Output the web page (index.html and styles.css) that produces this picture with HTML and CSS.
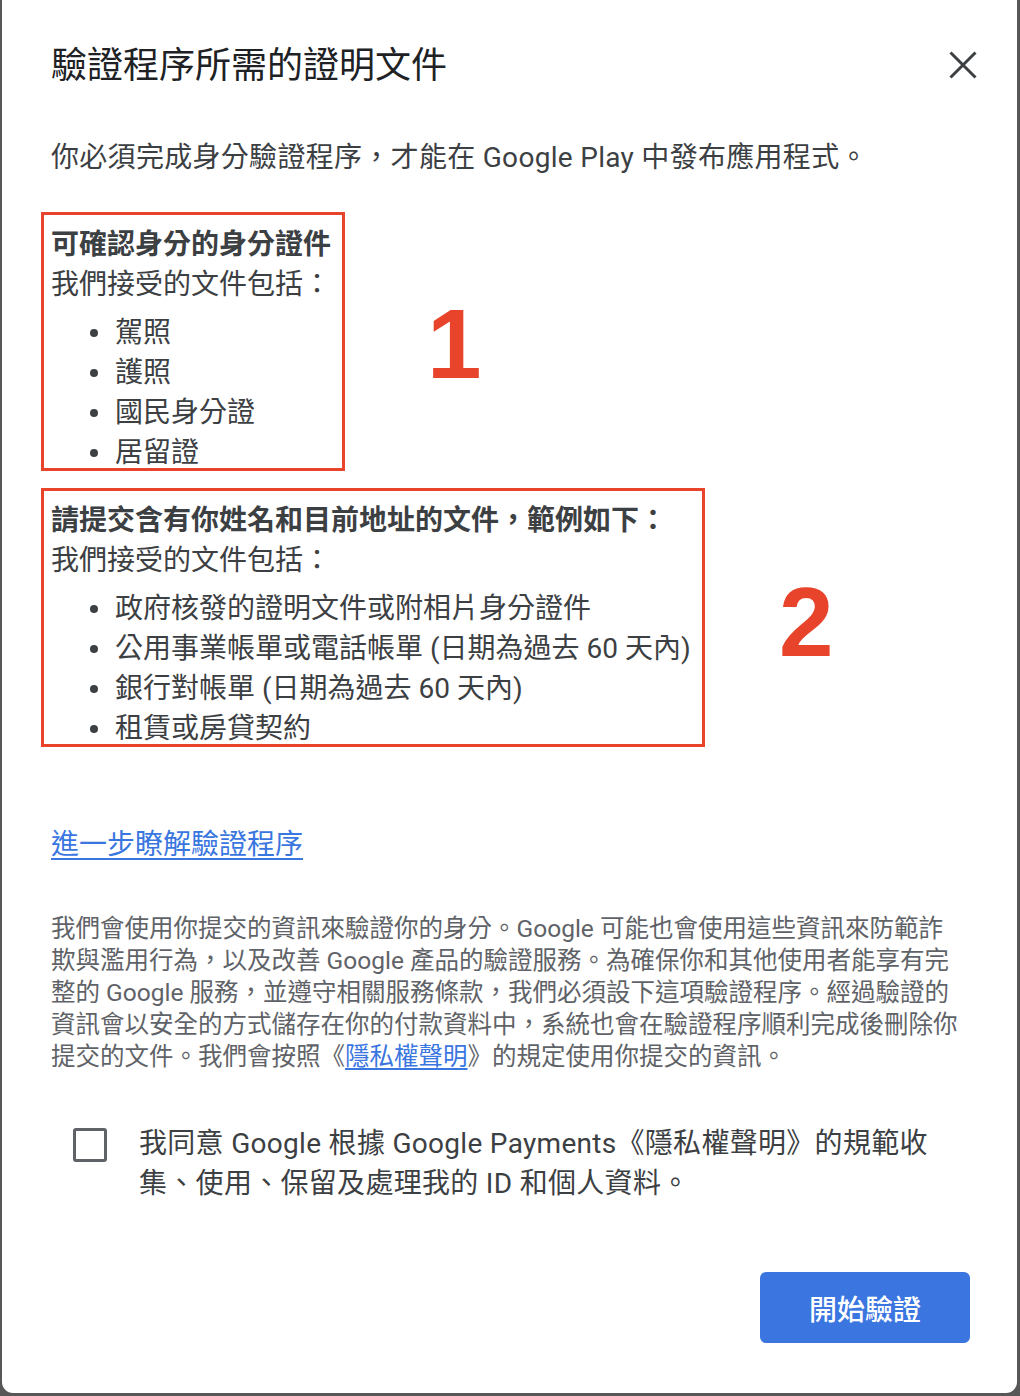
FILE: index.html
```html
<!DOCTYPE html>
<html lang="zh-Hant">
<head>
<meta charset="utf-8">
<title>驗證程序所需的證明文件</title>
<link rel="stylesheet" href="styles.css">
</head>
<body>
<div class="dialog">
  <header class="dialog-header">
    <h1 class="dialog-title">驗證程序所需的證明文件</h1>
    <button class="close-btn" aria-label="關閉">
      <svg width="28" height="28" viewBox="0 0 28 28"><path d="M1.5 1.5 L26.5 26.5 M26.5 1.5 L1.5 26.5" stroke="#3c4043" stroke-width="3" fill="none"/></svg>
    </button>
  </header>

  <p class="intro">你必須完成身分驗證程序，才能在 Google Play 中發布應用程式。</p>

  <div class="docs">
    <section class="doc-box">
      <div class="doc-heading">可確認身分的身分證件</div>
      <div class="doc-sub">我們接受的文件包括：</div>
      <ul class="doc-list">
        <li>駕照</li>
        <li>護照</li>
        <li>國民身分證</li>
        <li>居留證</li>
      </ul>
    </section>
    <section class="doc-box second">
      <div class="doc-heading">請提交含有你姓名和目前地址的文件，範例如下：</div>
      <div class="doc-sub">我們接受的文件包括：</div>
      <ul class="doc-list">
        <li>政府核發的證明文件或附相片身分證件</li>
        <li>公用事業帳單或電話帳單 (日期為過去 60 天內)</li>
        <li>銀行對帳單 (日期為過去 60 天內)</li>
        <li>租賃或房貸契約</li>
      </ul>
    </section>
  </div>

  <span class="annot annot-1">1</span>
  <span class="annot annot-2">2</span>

  <a class="learn-link" href="#">進一步瞭解驗證程序</a>

  <p class="fine-print">我們會使用你提交的資訊來驗證你的身分。Google 可能也會使用這些資訊來防範詐<br>欺與濫用行為，以及改善 Google 產品的驗證服務。為確保你和其他使用者能享有完<br>整的 Google 服務，並遵守相關服務條款，我們必須設下這項驗證程序。經過驗證的<br>資訊會以安全的方式儲存在你的付款資料中，系統也會在驗證程序順利完成後刪除你<br>提交的文件。我們會按照《<a href="#">隱私權聲明</a>》的規定使用你提交的資訊。</p>

  <label class="consent">
    <span class="checkbox"></span>
    <span class="consent-text">我同意 Google 根據 Google Payments《隱私權聲明》的規範收<br>集、使用、保留及處理我的 ID 和個人資料。</span>
  </label>

  <div class="actions">
    <button class="primary-btn">開始驗證</button>
  </div>
</div>
</body>
</html>
```

FILE: styles.css
```css
html, body {
  margin: 0;
  padding: 0;
}
body {
  background: #575757;
  width: 1020px;
  height: 1396px;
  overflow: hidden;
  font-family: Roboto, "Noto Sans CJK TC", "Noto Sans", sans-serif;
  color: #3c4043;
}
.dialog {
  position: relative;
  box-sizing: border-box;
  margin-left: 2px;
  width: 1015px;
  height: 1393px;
  background: #ffffff;
  border-radius: 0 0 11px 11px;
  padding: 44px 40px 0 49px;
}
.dialog-header {
  display: flex;
  align-items: center;
  justify-content: space-between;
  height: 44px;
}
.dialog-title {
  margin: 0;
  font-size: 36px;
  line-height: 44px;
  font-weight: 400;
  color: #202124;
}
.close-btn {
  border: 0;
  background: none;
  padding: 0;
  width: 28px;
  height: 28px;
  display: flex;
  margin-top: -3px;
}
.intro {
  margin: 50px 0 0;
  font-size: 28px;
  line-height: 40px;
  letter-spacing: 0.3px;
  color: #3c4043;
}
.docs {
  margin-top: 34px;
  display: flex;
  flex-direction: column;
  align-items: flex-start;
}
.doc-box {
  margin-left: -10px;
  border: 3px solid #e8432b;
  padding: 10px 11px 0 7px;
  font-size: 28px;
  line-height: 40px;
  color: #3c4043;
}
.doc-box.second {
  margin-top: 17px;
}
.doc-heading {
  font-weight: 700;
}
.doc-list {
  list-style: none;
  margin: 8px 0 -5px;
  padding: 0 0 0 39px;
}
.doc-list li {
  display: flex;
  align-items: center;
  white-space: nowrap;
}
.doc-list li::before {
  content: "";
  width: 8px;
  height: 8px;
  border-radius: 50%;
  background: #3c4043;
  margin-right: 17px;
  flex: none;
}
.annot {
  position: absolute;
  font-family: "Liberation Sans", Arial, sans-serif;
  font-weight: 700;
  font-size: 98px;
  line-height: 98px;
  color: #e8432b;
}
.annot-1 {
  left: 425px;
  top: 295px;
}
.annot-2 {
  left: 777px;
  top: 573px;
}
.learn-link {
  display: block;
  width: max-content;
  margin-top: 78px;
  font-size: 28px;
  line-height: 40px;
  color: #3a76e0;
  text-decoration: underline;
  text-underline-offset: 4px;
  text-decoration-thickness: 2px;
}
.fine-print {
  margin: 48px 0 0;
  font-size: 24.5px;
  line-height: 32px;
  color: #5f6368;
  white-space: nowrap;
}
.fine-print a {
  color: #3a76e0;
  text-decoration: underline;
  text-underline-offset: 3px;
}
.consent {
  display: flex;
  align-items: flex-start;
  margin-top: 51px;
  padding-left: 22px;
}
.checkbox {
  box-sizing: border-box;
  flex: none;
  width: 34px;
  height: 34px;
  margin-top: 4px;
  border: 3px solid #5f6368;
  border-radius: 3px;
}
.consent-text {
  margin-left: 32px;
  font-size: 28px;
  line-height: 40px;
  letter-spacing: 0.3px;
  color: #3c4043;
  white-space: nowrap;
}
.actions {
  display: flex;
  justify-content: flex-end;
  margin-top: 68px;
  padding-right: 7px;
}
.primary-btn {
  width: 210px;
  height: 71px;
  border: 0;
  border-radius: 6px;
  background: #3a75e0;
  color: #ffffff;
  font-family: Roboto, "Noto Sans CJK TC", sans-serif;
  font-size: 28px;
  font-weight: 500;
}
```
